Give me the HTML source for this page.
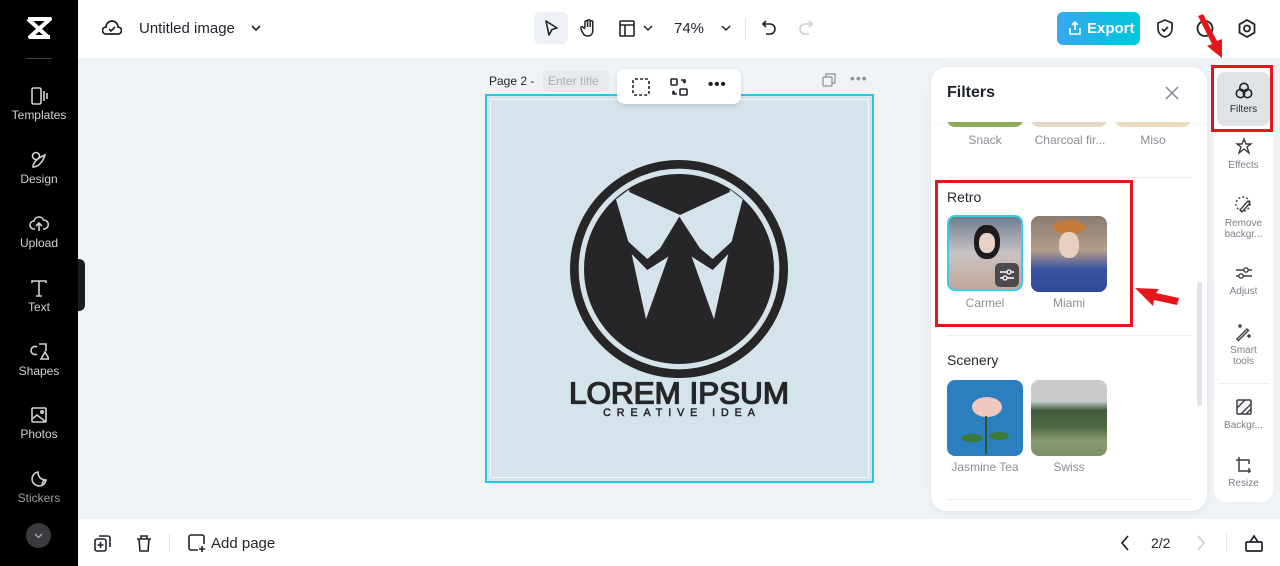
<!DOCTYPE html>
<html><head><meta charset="utf-8"><style>
*{box-sizing:border-box;margin:0;padding:0}
body{width:1280px;height:566px;overflow:hidden;background:#eff3f6;font-family:"Liberation Sans",sans-serif;position:relative;color:#1f2329}
.abs{position:absolute}
.side{left:0;top:0;width:78px;height:566px;background:#000}
.si{position:absolute;left:0;width:78px;text-align:center;color:#cfd2d6;font-size:12px}
.si svg{display:block;margin:0 auto 2px}
.top{left:78px;top:0;width:1202px;height:58px;background:#fff}
.bot{left:78px;top:519px;width:1202px;height:47px;background:#fff}
.panel{left:931px;top:67px;width:276px;height:444px;background:#fff;border-radius:16px;box-shadow:0 2px 8px rgba(0,0,0,.06);overflow:hidden}
.rt{left:1214px;top:65px;width:59px;height:437px;background:#fff;border-radius:12px}
.ri{position:absolute;left:0;width:59px;text-align:center;font-size:10px;color:#7a7f87;line-height:11px}
.ri svg{display:block;margin:0 auto 3px}
.th{position:absolute;width:76px;height:76px;border-radius:8px}
.lbl{position:absolute;width:76px;text-align:center;font-size:12px;color:#8a8f96}
.red{position:absolute;border:3px solid #e8141c}
</style></head><body>
<div class="abs side">
 <svg class="abs" style="left:26px;top:16px" width="26" height="24" viewBox="0 0 26 24"><path d="M2 3h22L4 21h20M2 3l20 18M24 3L4 21" stroke="#fff" stroke-width="4" fill="none" stroke-linejoin="round"/></svg>
 <div class="abs" style="left:26px;top:58px;width:26px;height:1px;background:#444"></div>
 <div class="si" style="top:86px"><svg width="20" height="20" viewBox="0 0 20 20" fill="none" stroke="#cfd2d6" stroke-width="1.6"><rect x="3" y="2" width="9" height="16" rx="1.5"/><path d="M15 5v10M18 7v6"/></svg>Templates</div>
 <div class="si" style="top:150px"><svg width="20" height="20" viewBox="0 0 20 20" fill="none" stroke="#cfd2d6" stroke-width="1.6"><circle cx="7" cy="6" r="3.5"/><path d="M4 17c0-5 5-9 12-12-2 6-6 12-12 12z"/></svg>Design</div>
 <div class="si" style="top:214px"><svg width="20" height="20" viewBox="0 0 20 20" fill="none" stroke="#cfd2d6" stroke-width="1.6"><path d="M6 15H5a4 4 0 010-8 5 5 0 019.5-1A4 4 0 0115 15h-1M10 9v8M7 12l3-3 3 3"/></svg>Upload</div>
 <div class="si" style="top:278px"><svg width="20" height="20" viewBox="0 0 20 20" fill="none" stroke="#cfd2d6" stroke-width="1.6"><path d="M3 5V3h14v2M10 3v15M7 18h6"/></svg>Text</div>
 <div class="si" style="top:342px"><svg width="20" height="20" viewBox="0 0 20 20" fill="none" stroke="#cfd2d6" stroke-width="1.6"><path d="M8 5a4 4 0 100 7M10 2h7v7M12 17l4-7 4 7z"/></svg>Shapes</div>
 <div class="si" style="top:405px"><svg width="20" height="20" viewBox="0 0 20 20" fill="none" stroke="#cfd2d6" stroke-width="1.6"><rect x="3" y="3" width="14" height="14" rx="1"/><path d="M3 14l5-4 9 7"/><circle cx="13" cy="7" r="1.2"/></svg>Photos</div>
 <div class="si" style="top:469px;color:#9a9da2"><svg width="20" height="20" viewBox="0 0 20 20" fill="none" stroke="#cfd2d6" stroke-width="1.6"><path d="M17 11a7 7 0 11-8-8c0 5 3 8 8 8zM17 11c-3 0-4 3-4 6"/></svg>Stickers</div>
 <div class="abs" style="left:26px;top:523px;width:25px;height:25px;border-radius:50%;background:#3a3b3e"><svg width="25" height="25" viewBox="0 0 25 25"><path d="M9 11l3.5 3.5L16 11" stroke="#aaa" stroke-width="1.4" fill="none"/></svg></div>
</div>
<div class="abs" style="left:78px;top:259px;width:7px;height:52px;background:#1c1c1e;border-radius:0 6px 6px 0"></div>
<div class="abs top">
 <svg class="abs" style="left:24px;top:19px" width="20" height="18" viewBox="0 0 20 18" fill="none" stroke="#1f2329" stroke-width="1.7"><path d="M5 15H4a3 3 0 010-7 6 6 0 0112 0 3 3 0 010 7H5z"/><path d="M7 10l2 2 4-4"/></svg>
 <div class="abs" style="left:61px;top:20px;font-size:15px">Untitled image</div>
 <svg class="abs" style="left:172px;top:23px" width="12" height="10"><path d="M2 3l4 4 4-4" stroke="#1f2329" stroke-width="1.6" fill="none"/></svg>
 <div class="abs" style="left:456px;top:12px;width:34px;height:32px;background:#eef1f5;border-radius:6px"></div>
 <svg class="abs" style="left:464px;top:19px" width="18" height="18" viewBox="0 0 18 18"><path d="M4 2l11 7-5 1.5L7 16z" fill="none" stroke="#1f2329" stroke-width="1.6" stroke-linejoin="round"/></svg>
 <svg class="abs" style="left:500px;top:18px" width="20" height="20" viewBox="0 0 20 20" fill="none" stroke="#1f2329" stroke-width="1.5"><path d="M7 10V4a1.3 1.3 0 012.6 0v5V3a1.3 1.3 0 012.6 0v6V4a1.3 1.3 0 012.6 0v8c0 4-2 6-5 6s-4-1-6-5l-1-3a1.2 1.2 0 012-1l2 2"/></svg>
 <svg class="abs" style="left:541px;top:20px" width="16" height="17" viewBox="0 0 16 17" fill="none" stroke="#1f2329" stroke-width="1.6"><rect x="1" y="1" width="14" height="15" rx="1"/><path d="M1 5h14M6 5v11"/></svg>
 <svg class="abs" style="left:564px;top:23px" width="12" height="10"><path d="M2 3l4 4 4-4" stroke="#1f2329" stroke-width="1.5" fill="none"/></svg>
 <div class="abs" style="left:596px;top:20px;font-size:15px">74%</div>
 <svg class="abs" style="left:642px;top:23px" width="12" height="10"><path d="M2 3l4 4 4-4" stroke="#1f2329" stroke-width="1.5" fill="none"/></svg>
 <div class="abs" style="left:667px;top:18px;width:1px;height:22px;background:#e3e5e8"></div>
 <svg class="abs" style="left:683px;top:19px" width="16" height="18" viewBox="0 0 16 18" fill="none" stroke="#1f2329" stroke-width="1.6"><path d="M5 2L2 5l3 3M2 5h7a5 5 0 010 10H5"/></svg>
 <svg class="abs" style="left:720px;top:19px" width="16" height="18" viewBox="0 0 16 18" fill="none" stroke="#c9ced4" stroke-width="1.6"><path d="M11 2l3 3-3 3M14 5H7a5 5 0 000 10h4"/></svg>
 <div class="abs" style="left:979px;top:12px;width:83px;height:33px;border-radius:6px;background:linear-gradient(90deg,#36a8ee,#00c7dc);color:#fff;font-weight:bold;font-size:15px;line-height:33px;padding-left:30px">Export</div>
 <svg class="abs" style="left:990px;top:20px" width="14" height="16" viewBox="0 0 14 16" fill="none" stroke="#fff" stroke-width="1.6"><path d="M7 10V2M4 5l3-3 3 3M2 8v6h10V8"/></svg>
 <svg class="abs" style="left:1077px;top:18px" width="20" height="21" viewBox="0 0 20 21" fill="none" stroke="#1f2329" stroke-width="1.7"><path d="M10 2l7 3v5c0 5-3 8-7 9-4-1-7-4-7-9V5z"/><path d="M7 11l2 2 4-4"/></svg>
 <svg class="abs" style="left:1117px;top:18px" width="20" height="21" viewBox="0 0 20 21" fill="none" stroke="#1f2329" stroke-width="1.8"><circle cx="10" cy="10.5" r="7.5"/></svg>
 <svg class="abs" style="left:1159px;top:18px" width="20" height="21" viewBox="0 0 20 21" fill="none" stroke="#1f2329" stroke-width="1.8"><path d="M10 2l7.5 4.3v8.4L10 19l-7.5-4.3V6.3z"/><circle cx="10" cy="10.5" r="3"/></svg>
</div>
<!-- canvas -->
<div class="abs" style="left:489px;top:74px;font-size:12px">Page 2 -</div>
<div class="abs" style="left:543px;top:71px;width:66px;height:21px;background:#e6eaee;border-radius:4px;color:#a8afb8;font-size:12px;line-height:21px;padding-left:5px">Enter title</div>
<svg class="abs" style="left:822px;top:73px" width="14" height="14" viewBox="0 0 14 14" fill="none" stroke="#8a9099" stroke-width="1.2"><rect x="1" y="4" width="9" height="9" rx="1"/><path d="M4 4V1h9v9h-3"/></svg>
<div class="abs" style="left:850px;top:70px;font-size:14px;color:#8a9099;letter-spacing:1px">•••</div>
<div class="abs" style="left:485px;top:94px;width:389px;height:389px;border:2px solid #21c7e0;background:#d5e4ea"><div style="margin:3px;height:379px;border:1.5px solid #f2f7f9"></div></div>
<div class="abs" style="left:617px;top:69px;width:124px;height:35px;background:#fff;border-radius:8px;box-shadow:0 2px 6px rgba(0,0,0,.12)">
 <svg class="abs" style="left:15px;top:9px" width="18" height="18" viewBox="0 0 18 18" fill="none" stroke="#1f2329" stroke-width="1.6" stroke-dasharray="3 2"><rect x="1" y="1" width="16" height="16" rx="2"/></svg>
 <svg class="abs" style="left:53px;top:9px" width="18" height="18" viewBox="0 0 18 18" fill="none" stroke="#1f2329" stroke-width="1.6"><rect x="1" y="1" width="6" height="6" rx="1"/><rect x="10" y="11" width="7" height="6" rx="1"/><path d="M11 2h4v3M15 5l-2-2M7 16H3v-3M3 13l2 2"/></svg>
 <div class="abs" style="left:91px;top:7px;font-size:15px;letter-spacing:1px;font-weight:bold">•••</div>
</div>
<svg class="abs" style="left:560px;top:160px" width="240" height="260" viewBox="0 0 720 780">
 <circle cx="357" cy="327" r="314" fill="none" stroke="#262628" stroke-width="26"/>
 <circle cx="357" cy="327" r="285" fill="#262628"/>
 <polygon fill="#d5e4ea" points="168,118 205,90 358,162 512,90 548,118 515,245 458,297 420,265 358,170 300,265 262,297 205,245"/>
 <path d="M205,95 Q358,45 512,95 L360,165 Z" fill="#262628"/>
 <polygon fill="#d5e4ea" points="215,282 262,330 325,290 258,478"/>
 <polygon fill="#d5e4ea" points="505,282 458,330 395,290 462,478"/>
 <text x="357" y="730" text-anchor="middle" font-family="Liberation Sans" font-size="92" fill="#262628" stroke="#262628" stroke-width="4" textLength="660" lengthAdjust="spacingAndGlyphs">LOREM IPSUM</text>
 <text x="357" y="768" text-anchor="middle" font-family="Liberation Sans" font-size="32" fill="#262628" stroke="#262628" stroke-width="1.5" textLength="455" lengthAdjust="spacing">CREATIVE IDEA</text>
</svg>
<!-- panel -->
<div class="abs panel">
 <div class="th" style="left:16px;top:34px;height:26px;background:#8fae5a;border-radius:0 0 8px 8px"></div>
 <div class="th" style="left:100px;top:34px;height:26px;background:#e5dac8;border-radius:0 0 8px 8px"></div>
 <div class="th" style="left:184px;top:34px;height:26px;background:#efdfc2;border-radius:0 0 8px 8px"></div>
 <div class="abs" style="left:0;top:0;width:276px;height:55px;background:#fff;box-shadow:0 2px 4px rgba(0,0,0,.03)"></div>
 <div class="abs" style="left:16px;top:17px;font-size:16px;font-weight:bold">Filters</div>
 <svg class="abs" style="left:233px;top:18px" width="16" height="16"><path d="M2 2l12 12M14 2L2 14" stroke="#80868e" stroke-width="1.5"/></svg>
 <div class="lbl" style="left:16px;top:66px">Snack</div>
 <div class="lbl" style="left:100px;top:66px;width:78px">Charcoal fir...</div>
 <div class="lbl" style="left:184px;top:66px">Miso</div>
 <div class="abs" style="left:16px;top:110px;width:245px;height:1px;background:#eceef0"></div>
 <div class="abs" style="left:16px;top:122px;font-size:14px">Retro</div>
 <div class="th" style="left:16px;top:148px;background:linear-gradient(180deg,#6e7e90 0%,#c9c3c5 50%,#c4a89a 100%);border:2px solid #36d0e6"><div style="position:absolute;left:25px;top:8px;width:26px;height:34px;border-radius:45%;background:#1f1b1d"></div><div style="position:absolute;left:30px;top:16px;width:16px;height:20px;border-radius:45%;background:#e8d2c8"></div><div class="abs" style="left:46px;top:46px;width:24px;height:24px;border-radius:5px;background:#4c4a4c"><svg width="24" height="24"><path d="M5 9h14M5 15h14" stroke="#fff" stroke-width="1.4"/><circle cx="14" cy="9" r="2" fill="#4c4a4c" stroke="#fff" stroke-width="1.3"/><circle cx="10" cy="15" r="2" fill="#4c4a4c" stroke="#fff" stroke-width="1.3"/></svg></div></div>
 <div class="th" style="left:100px;top:149px;background:linear-gradient(180deg,#8a7b70 0%,#b59c8a 45%,#3a55a0 70%,#2e4a94 100%)"><div style="position:absolute;left:22px;top:4px;width:32px;height:14px;border-radius:50%;background:#c87a3a"></div><div style="position:absolute;left:28px;top:16px;width:20px;height:26px;border-radius:45%;background:#e8cfc0"></div></div>
 <div class="lbl" style="left:16px;top:229px">Carmel</div>
 <div class="lbl" style="left:100px;top:229px">Miami</div>
 <div class="abs" style="left:16px;top:268px;width:245px;height:1px;background:#eceef0"></div>
 <div class="abs" style="left:16px;top:285px;font-size:14px">Scenery</div>
 <div class="th" style="left:16px;top:313px;background:#2c7fbf"><div style="position:absolute;left:25px;top:17px;width:30px;height:20px;border-radius:50%;background:#f0c8c0"></div><div style="position:absolute;left:38px;top:36px;width:2px;height:38px;background:#2c5a30"></div><div style="position:absolute;left:14px;top:54px;width:22px;height:8px;border-radius:50%;background:#3c7a3a"></div><div style="position:absolute;left:42px;top:52px;width:20px;height:8px;border-radius:50%;background:#3c7a3a"></div></div>
 <div class="th" style="left:100px;top:313px;background:linear-gradient(180deg,#c9cccb 0%,#c9cccb 28%,#3f5a3a 40%,#4e6a44 62%,#8a9a70 80%,#7e8e68 100%)"></div>
 <div class="lbl" style="left:16px;top:393px">Jasmine Tea</div>
 <div class="lbl" style="left:100px;top:393px">Swiss</div>
 <div class="abs" style="left:16px;top:432px;width:245px;height:1px;background:#eceef0"></div>
 <div class="abs" style="left:266px;top:215px;width:5px;height:124px;background:#e2e5e8;border-radius:3px"></div>
</div>
<!-- right toolbar -->
<div class="abs rt">
 <div class="abs" style="left:3px;top:7px;width:53px;height:54px;background:#dfe3e8;border-radius:8px"></div>
 <div class="ri" style="top:16px;color:#2a2e34"><svg width="20" height="20" viewBox="0 0 20 20" fill="none" stroke="#1f2329" stroke-width="1.6"><circle cx="10" cy="6.5" r="4.2"/><circle cx="6.5" cy="12.5" r="4.2"/><circle cx="13.5" cy="12.5" r="4.2"/></svg>Filters</div>
 <div class="ri" style="top:72px"><svg width="20" height="20" viewBox="0 0 20 20" fill="none" stroke="#3a3f46" stroke-width="1.4"><path d="M10 2l2 5h5l-4 3 2 6-5-4-5 4 2-6-4-3h5z"/></svg>Effects</div>
 <div class="ri" style="top:130px"><svg width="20" height="20" viewBox="0 0 20 20" fill="none" stroke="#3a3f46" stroke-width="1.4"><circle cx="9" cy="9" r="7" stroke-dasharray="2 2"/><path d="M6 15l8-9 2 2-8 9z"/></svg>Remove<br>backgr...</div>
 <div class="ri" style="top:198px"><svg width="20" height="20" viewBox="0 0 20 20" fill="none" stroke="#3a3f46" stroke-width="1.4"><path d="M2 7h16M2 13h16"/><circle cx="12" cy="7" r="2.2" fill="#fff"/><circle cx="7" cy="13" r="2.2" fill="#fff"/></svg>Adjust</div>
 <div class="ri" style="top:257px"><svg width="20" height="20" viewBox="0 0 20 20" fill="none" stroke="#3a3f46" stroke-width="1.4"><path d="M3 17L13 7l1.5 1.5L4.5 18.5zM6 2v4M4 4h4M15 12v4M13 14h4"/></svg>Smart<br>tools</div>
 <div class="abs" style="left:4px;top:318px;width:51px;height:1px;background:#eceef0"></div>
 <div class="ri" style="top:332px"><svg width="20" height="20" viewBox="0 0 20 20" fill="none" stroke="#3a3f46" stroke-width="1.5"><rect x="3" y="3" width="14" height="14" rx="1"/><path d="M3 11l8-8M7 17L17 7M12 17l5-5"/></svg>Backgr...</div>
 <div class="ri" style="top:390px"><svg width="20" height="20" viewBox="0 0 20 20" fill="none" stroke="#3a3f46" stroke-width="1.5"><path d="M5 2v14h12M2 5h13v4M15 13v5"/></svg>Resize</div>
</div>
<div class="red" style="left:1211px;top:65px;width:62px;height:67px"></div>
<div class="red" style="left:935px;top:180px;width:198px;height:147px"></div>
<svg class="abs" style="left:1190px;top:14px" width="40" height="46" viewBox="0 0 40 46"><path d="M8 2l14 28-5 2 15 12 0-19-5 2L13 0z" fill="#e8141c"/></svg>
<svg class="abs" style="left:1133px;top:282px" width="46" height="30" viewBox="0 0 46 30"><path d="M2 6l18 18 1-6 23 5 2-7-23-5 3-4z" fill="#e8141c"/></svg>
<!-- bottom -->
<div class="abs bot">
 <svg class="abs" style="left:16px;top:16px" width="17" height="17" viewBox="0 0 17 17" fill="none" stroke="#1f2329" stroke-width="1.6"><rect x="1" y="4" width="11" height="12" rx="2"/><path d="M5 1h9a2 2 0 012 2v9M6.5 7v6M3.5 10h6"/></svg>
 <svg class="abs" style="left:58px;top:16px" width="16" height="17" viewBox="0 0 16 17" fill="none" stroke="#1f2329" stroke-width="1.6"><path d="M1 4h14M5 4V1h6v3M3 4l1 12h8l1-12"/></svg>
 <div class="abs" style="left:91px;top:15px;width:1px;height:18px;background:#e3e5e8"></div>
 <svg class="abs" style="left:110px;top:15px" width="18" height="18" viewBox="0 0 18 18" fill="none" stroke="#1f2329" stroke-width="1.6"><path d="M10 16H3a2 2 0 01-2-2V3a2 2 0 012-2h11a2 2 0 012 2v7M14 12v6M11 15h6"/></svg>
 <div class="abs" style="left:133px;top:16px;font-size:15px">Add page</div>
 <svg class="abs" style="left:1041px;top:15px" width="12" height="18"><path d="M9 2L3 9l6 7" stroke="#1f2329" stroke-width="1.7" fill="none"/></svg>
 <div class="abs" style="left:1073px;top:16px;font-size:14px">2/2</div>
 <svg class="abs" style="left:1117px;top:15px" width="12" height="18"><path d="M3 2l6 7-6 7" stroke="#c9ced4" stroke-width="1.6" fill="none"/></svg>
 <div class="abs" style="left:1148px;top:15px;width:1px;height:18px;background:#e3e5e8"></div>
 <svg class="abs" style="left:1166px;top:14px" width="20" height="20" viewBox="0 0 20 20" fill="none" stroke="#1f2329" stroke-width="1.7"><rect x="2" y="9" width="16" height="9" rx="1"/><path d="M6 9l4-6 4 6"/></svg>
</div>
</body></html>
